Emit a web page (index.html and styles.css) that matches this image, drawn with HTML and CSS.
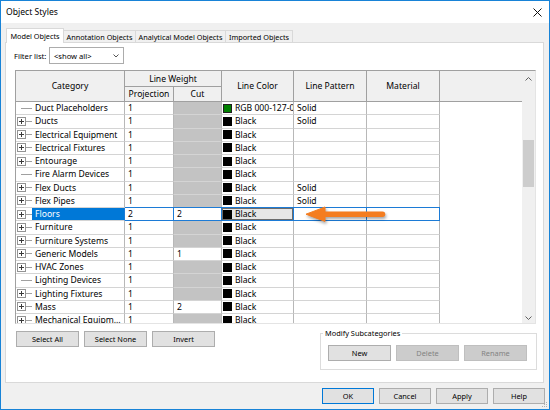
FILE: index.html
```html
<!DOCTYPE html>
<html>
<head>
<meta charset="utf-8">
<title>Object Styles</title>
<link rel="stylesheet" href="styles.css">
</head>
<body>
<svg class="defs" width="0" height="0">
  <defs>
    <symbol id="plus" viewBox="0 0 9 9">
      <rect x="0.5" y="0.5" width="8" height="8" fill="#fff" stroke="#939393"/>
      <path d="M2 4.5h5M4.5 2v5" stroke="#3a3a3a"/>
    </symbol>
  </defs>
</svg>
<div class="window">
  <div class="titlebar">
    <span>Object Styles</span>
    <svg class="close" width="9" height="9" viewBox="0 0 9 9"><path d="M0.5 0.5L8.5 8.5M8.5 0.5L0.5 8.5" stroke="#111" stroke-width="1"/></svg>
  </div>
  <div class="tabs">
    <div class="tab active">Model Objects</div>
    <div class="tab t2">Annotation Objects</div>
    <div class="tab t3">Analytical Model Objects</div>
    <div class="tab t4">Imported Objects</div>
  </div>
  <div class="panel">
    <div class="filter">
      <span class="flabel">Filter list:</span>
      <div class="combo"><span>&lt;show all&gt;</span><svg width="6" height="4" viewBox="0 0 6 4"><path d="M0.5 0.5L3 3L5.5 0.5" fill="none" stroke="#555"/></svg></div>
    </div>
    <div class="gridbox">
      <div class="grid">
        <div class="h cat">Category</div>
        <div class="h lw">Line Weight</div>
        <div class="h tall">Line Color</div>
        <div class="h tall">Line Pattern</div>
        <div class="h tall">Material</div>
        <div class="h tall last"></div>
        <div class="h">Projection</div>
        <div class="h">Cut</div>

        <div class="c cat"><span class="tree"><i class="ln long"></i></span><span class="lbl">Duct Placeholders</span></div>
        <div class="c">1</div><div class="c g"></div>
        <div class="c lc"><i class="sw green"></i>RGB 000-127-0</div>
        <div class="c">Solid</div><div class="c"></div><div class="c x"></div>

        <div class="c cat"><span class="tree"><svg class="pl"><use href="#plus"/></svg><i class="ln"></i></span><span class="lbl">Ducts</span></div>
        <div class="c">1</div><div class="c g"></div>
        <div class="c lc"><i class="sw"></i>Black</div>
        <div class="c">Solid</div><div class="c"></div><div class="c x"></div>

        <div class="c cat"><span class="tree"><svg class="pl"><use href="#plus"/></svg><i class="ln"></i></span><span class="lbl">Electrical Equipment</span></div>
        <div class="c">1</div><div class="c g"></div>
        <div class="c lc"><i class="sw"></i>Black</div>
        <div class="c"></div><div class="c"></div><div class="c x"></div>

        <div class="c cat"><span class="tree"><svg class="pl"><use href="#plus"/></svg><i class="ln"></i></span><span class="lbl">Electrical Fixtures</span></div>
        <div class="c">1</div><div class="c g"></div>
        <div class="c lc"><i class="sw"></i>Black</div>
        <div class="c"></div><div class="c"></div><div class="c x"></div>

        <div class="c cat"><span class="tree"><svg class="pl"><use href="#plus"/></svg><i class="ln"></i></span><span class="lbl">Entourage</span></div>
        <div class="c">1</div><div class="c g"></div>
        <div class="c lc"><i class="sw"></i>Black</div>
        <div class="c"></div><div class="c"></div><div class="c x"></div>

        <div class="c cat"><span class="tree"><i class="ln long"></i></span><span class="lbl">Fire Alarm Devices</span></div>
        <div class="c">1</div><div class="c g"></div>
        <div class="c lc"><i class="sw"></i>Black</div>
        <div class="c"></div><div class="c"></div><div class="c x"></div>

        <div class="c cat"><span class="tree"><svg class="pl"><use href="#plus"/></svg><i class="ln"></i></span><span class="lbl">Flex Ducts</span></div>
        <div class="c">1</div><div class="c g"></div>
        <div class="c lc"><i class="sw"></i>Black</div>
        <div class="c">Solid</div><div class="c"></div><div class="c x"></div>

        <div class="c cat"><span class="tree"><svg class="pl"><use href="#plus"/></svg><i class="ln"></i></span><span class="lbl">Flex Pipes</span></div>
        <div class="c">1</div><div class="c g"></div>
        <div class="c lc"><i class="sw"></i>Black</div>
        <div class="c">Solid</div><div class="c"></div><div class="c x"></div>

        <div class="c cat sel"><span class="tree"><svg class="pl"><use href="#plus"/></svg><i class="ln"></i></span><span class="lbl">Floors</span></div>
        <div class="c s">2</div><div class="c s">2</div>
        <div class="c lc s"><span class="cbtn"><i class="sw"></i>Black</span></div>
        <div class="c s"></div><div class="c s"></div><div class="c x"></div>

        <div class="c cat"><span class="tree"><svg class="pl"><use href="#plus"/></svg><i class="ln"></i></span><span class="lbl">Furniture</span></div>
        <div class="c">1</div><div class="c g"></div>
        <div class="c lc"><i class="sw"></i>Black</div>
        <div class="c"></div><div class="c"></div><div class="c x"></div>

        <div class="c cat"><span class="tree"><svg class="pl"><use href="#plus"/></svg><i class="ln"></i></span><span class="lbl">Furniture Systems</span></div>
        <div class="c">1</div><div class="c g"></div>
        <div class="c lc"><i class="sw"></i>Black</div>
        <div class="c"></div><div class="c"></div><div class="c x"></div>

        <div class="c cat"><span class="tree"><svg class="pl"><use href="#plus"/></svg><i class="ln"></i></span><span class="lbl">Generic Models</span></div>
        <div class="c">1</div><div class="c">1</div>
        <div class="c lc"><i class="sw"></i>Black</div>
        <div class="c"></div><div class="c"></div><div class="c x"></div>

        <div class="c cat"><span class="tree"><svg class="pl"><use href="#plus"/></svg><i class="ln"></i></span><span class="lbl">HVAC Zones</span></div>
        <div class="c">1</div><div class="c g"></div>
        <div class="c lc"><i class="sw"></i>Black</div>
        <div class="c"></div><div class="c"></div><div class="c x"></div>

        <div class="c cat"><span class="tree"><i class="ln long"></i></span><span class="lbl">Lighting Devices</span></div>
        <div class="c">1</div><div class="c g"></div>
        <div class="c lc"><i class="sw"></i>Black</div>
        <div class="c"></div><div class="c"></div><div class="c x"></div>

        <div class="c cat"><span class="tree"><svg class="pl"><use href="#plus"/></svg><i class="ln"></i></span><span class="lbl">Lighting Fixtures</span></div>
        <div class="c">1</div><div class="c g"></div>
        <div class="c lc"><i class="sw"></i>Black</div>
        <div class="c"></div><div class="c"></div><div class="c x"></div>

        <div class="c cat"><span class="tree"><svg class="pl"><use href="#plus"/></svg><i class="ln"></i></span><span class="lbl">Mass</span></div>
        <div class="c">1</div><div class="c">2</div>
        <div class="c lc"><i class="sw"></i>Black</div>
        <div class="c"></div><div class="c"></div><div class="c x"></div>

        <div class="c cat"><span class="tree"><svg class="pl"><use href="#plus"/></svg><i class="ln"></i></span><span class="lbl">Mechanical Equipm...</span></div>
        <div class="c">1</div><div class="c g"></div>
        <div class="c lc"><i class="sw"></i>Black</div>
        <div class="c"></div><div class="c"></div><div class="c x"></div>
      </div>
      <div class="vscroll">
        <div class="sbb"><svg width="7" height="4" viewBox="0 0 7 4"><path d="M0.5 3.5L3.5 0.5L6.5 3.5" fill="none" stroke="#606060"/></svg></div>
        <div class="sbtrack"><div class="thumb"></div></div>
        <div class="sbb down"><svg width="7" height="4" viewBox="0 0 7 4"><path d="M0.5 0.5L3.5 3.5L6.5 0.5" fill="none" stroke="#606060"/></svg></div>
      </div>
      <svg class="arrow" width="90" height="20" viewBox="0 0 90 20">
        <path d="M6 10.2L25 3L25 17.4Z" fill="#f47d20" stroke="#f47d20" stroke-width="1" stroke-linejoin="round"/>
        <line x1="23" y1="10.2" x2="82.5" y2="10.2" stroke="#f47d20" stroke-width="5.5" stroke-linecap="round"/>
      </svg>
    </div>
    <div class="lower">
      <div class="selbtns">
        <button class="btn">Select All</button>
        <button class="btn">Select None</button>
        <button class="btn">Invert</button>
      </div>
      <fieldset class="group">
        <legend>Modify Subcategories</legend>
        <div class="grpbtns">
          <button class="btn">New</button>
          <button class="btn dis">Delete</button>
          <button class="btn dis">Rename</button>
        </div>
      </fieldset>
    </div>
  </div>
  <div class="footer">
    <button class="btn fbtn ok">OK</button>
    <button class="btn fbtn">Cancel</button>
    <button class="btn fbtn">Apply</button>
    <button class="btn fbtn">Help</button>
  </div>
  <svg class="grip" width="6" height="6" viewBox="0 0 6 6"><rect x="4" y="0" width="1" height="1" fill="#b0b0b0"/><rect x="2" y="2" width="1" height="1" fill="#b0b0b0"/><rect x="4" y="2" width="1" height="1" fill="#b0b0b0"/><rect x="0" y="4" width="1" height="1" fill="#b0b0b0"/><rect x="2" y="4" width="1" height="1" fill="#b0b0b0"/><rect x="4" y="4" width="1" height="1" fill="#b0b0b0"/></svg>
</div>
</body>
</html>
```

FILE: styles.css
```css
* { box-sizing: border-box; }
html, body { margin: 0; padding: 0; }
body {
  width: 550px;
  height: 410px;
  overflow: hidden;
  background: #f0f0f0;
  font-family: "Noto Sans", "Open Sans", sans-serif;
  color: #000;
}
.defs { position: absolute; width: 0; height: 0; }

.window {
  position: relative;
  width: 550px;
  height: 410px;
  border: 1px solid #1883d7;
  background: #f0f0f0;
  display: flex;
  flex-direction: column;
}
.titlebar {
  flex: none;
  height: 22px;
  background: #fff;
  display: flex;
  align-items: center;
  justify-content: space-between;
  padding: 0 7px 0 5px;
  font-size: 8.6px;
}
.close { display: block; }

.tabs {
  flex: none;
  display: flex;
  align-items: flex-end;
  height: 14px;
  margin: 5px 0 0 5px;
}
.tab {
  height: 12px;
  border-top: 1px solid #d9d9d9;
  border-right: 1px solid #d9d9d9;
  font-size: 7.3px;
  display: flex;
  align-items: center;
  justify-content: center;
  white-space: nowrap;
  background: #f0f0f0;
}
.tab.active {
  width: 58px;
  height: 15px;
  border-left: 1px solid #d9d9d9;
  background: #fff;
  margin-bottom: -1px;
  position: relative;
  z-index: 1;
}
.t2 { width: 72px; }
.t3 { width: 90px; }
.t4 { width: 67px; }

.panel {
  flex: none;
  width: 539px;
  height: 341px;
  margin-left: 4px;
  background: #fff;
  border: 1px solid #d9d9d9;
  display: flex;
  flex-direction: column;
}

.filter {
  display: flex;
  align-items: center;
  height: 17px;
  margin: 4px 0 0 8px;
  font-size: 7.6px;
}
.flabel { width: 35px; }
.combo {
  width: 75px;
  height: 17px;
  border: 1px solid #acacac;
  display: flex;
  align-items: center;
  justify-content: space-between;
  padding: 0 4px 0 4px;
}
.combo svg { display: block; }

.gridbox {
  position: relative;
  display: flex;
  width: 521px;
  height: 254px;
  margin: 6px 0 0 9px;
  border: 1px solid #a0a0a0;
  border-right-color: #e4e4e4;
  border-bottom-color: #e4e4e4;
}
.grid {
  flex: 1;
  min-width: 0;
  display: grid;
  grid-template-columns: 109px 49px 48px 72px 73px 73px 1fr;
  grid-template-rows: 16px 15px;
  grid-auto-rows: 13.25px;
  overflow: hidden;
  background: #fff;
  font-size: 8.6px;
}
.h {
  background: #f0f0f0;
  border-right: 1px solid #a0a0a0;
  border-bottom: 1px solid #a0a0a0;
  display: flex;
  align-items: center;
  justify-content: center;
  white-space: nowrap;
}
.h.cat, .h.tall { grid-row: span 2; }
.h.lw { grid-column: span 2; }
.h.last { border-right: none; }

.c {
  border-right: 1px solid #b8b8b8;
  border-bottom: 1px solid #d4d4d4;
  display: flex;
  align-items: center;
  padding-left: 3px;
  white-space: nowrap;
  overflow: hidden;
  min-width: 0;
}
.c.g { background: #c3c3c3; }
.c.x { border: none; }
.c.lc { padding-left: 1px; }
.sw {
  flex: none;
  width: 9px;
  height: 9px;
  background: #000;
  margin-right: 3px;
}
.sw.green { background: #008000; border: 1px solid #1f1f1f; }

.c.cat { padding-left: 0; }
.tree {
  flex: none;
  width: 16px;
  height: 100%;
  display: flex;
  align-items: center;
}
.pl { flex: none; display: block; width: 9px; height: 9px; margin-left: 1px; }
.ln { display: block; flex: none; width: 6px; height: 1px; background: #a0a0a0; }
.ln.long { width: 11px; margin-left: 5px; }
.lbl {
  flex: 1;
  height: 100%;
  display: flex;
  align-items: center;
  padding-left: 3px;
  overflow: hidden;
}
.cat.sel { border-right-color: #1c7bd6; }
.cat.sel .lbl { background: #0078d7; color: #fff; }
.c.s {
  border-right-color: #1c7bd6;
  border-bottom-color: #1c7bd6;
  box-shadow: 0 -1px 0 #1c7bd6;
}
.c.lc.s { padding: 0; }
.cbtn {
  flex: 1;
  align-self: stretch;
  display: flex;
  align-items: center;
  background: #e6e6e6;
  border: 1px solid #6b6b6b;
}

.vscroll {
  flex: none;
  width: 13px;
  background: #f0f0f0;
  display: flex;
  flex-direction: column;
}
.sbb {
  flex: none;
  height: 16px;
  display: flex;
  align-items: center;
  justify-content: center;
}
.sbb svg { display: block; }
.sbb.down { align-items: flex-end; padding-bottom: 3px; }
.sbtrack { flex: 1; display: flex; justify-content: center; }
.thumb { width: 11px; height: 47px; margin-top: 53px; background: #cdcdcd; }

.arrow {
  position: absolute;
  left: 284px;
  top: 133px;
  overflow: visible;
  filter: drop-shadow(1px 2px 1.5px rgba(0, 0, 0, 0.35));
}

.lower {
  display: flex;
  justify-content: space-between;
  align-items: flex-start;
  padding: 0 6px 0 10px;
}
.selbtns { display: flex; gap: 5px; margin-top: 7px; }
.btn {
  width: 63px;
  height: 16px;
  margin: 0;
  padding: 0;
  background: #e1e1e1;
  border: 1px solid #adadad;
  font-family: inherit;
  font-size: 7.4px;
  color: #000;
  display: flex;
  align-items: center;
  justify-content: center;
}
.btn.dis { background: #cccccc; border-color: #bfbfbf; color: #838383; }
.group {
  width: 217px;
  min-width: 0;
  margin: 4px 0 0 0;
  padding: 0;
  border: 1px solid #dcdcdc;
}
.group legend {
  margin-left: 2px;
  padding: 0 2px;
  font-size: 7.4px;
  line-height: 11px;
}
.grpbtns { display: flex; gap: 5px; padding: 6px 0 8px 7px; }

.footer {
  flex: none;
  display: flex;
  justify-content: flex-end;
  gap: 5px;
  margin-top: 5px;
  padding-right: 4px;
}
.fbtn { width: 52px; }
.ok { border-color: #0078d7; }

.grip { position: absolute; right: 1px; bottom: 1px; display: block; }
```
